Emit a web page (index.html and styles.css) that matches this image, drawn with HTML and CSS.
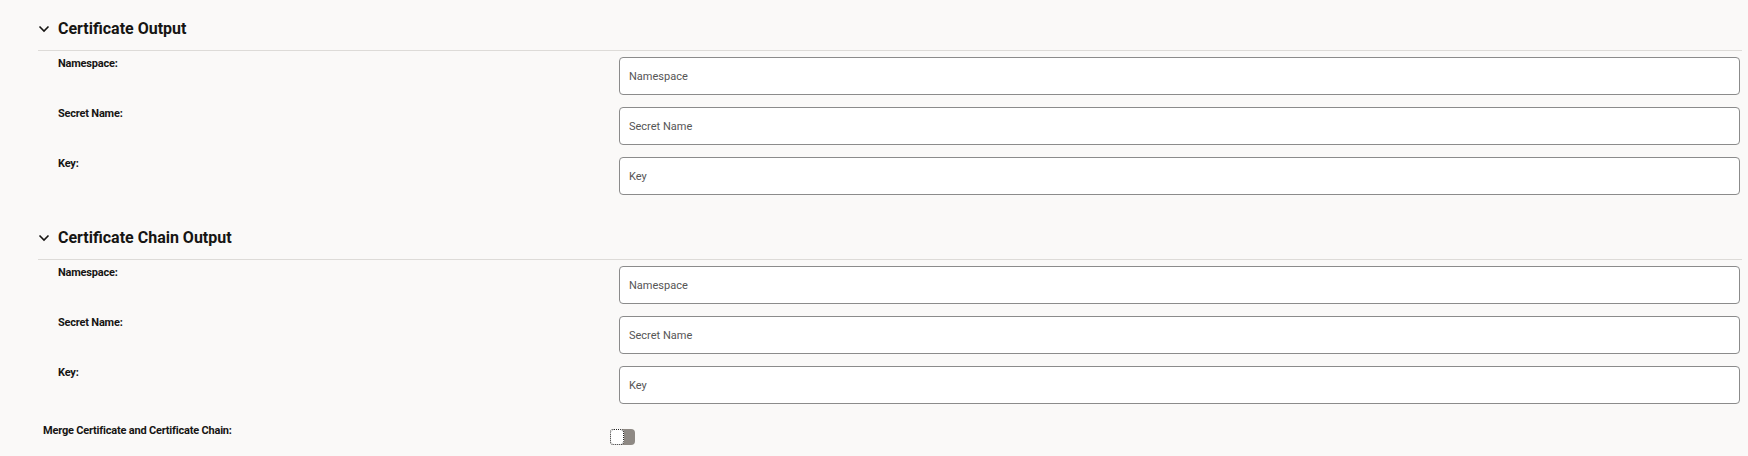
FILE: index.html
```html
<!DOCTYPE html>
<html lang="en">

<head>
  <meta charset="UTF-8" />
  <meta name="viewport" content="width=device-width, initial-scale=1.0" />
  <title>Certificate Output</title>
  <link rel="stylesheet" href="styles.css">
</head>

<body>
  <div class="page">
    <!-- 证书输出 -->
    <div class="section">
      <div class="section_head">
        <svg class="chevron" width="12" height="8" viewBox="0 0 12 8"><path d="M1.5 1.5 L6 6 L10.5 1.5" fill="none" stroke="#161513" stroke-width="1.6"/></svg>
        <span>Certificate Output</span>
      </div>
      <div class="fields">
        <label class="field_label">Namespace:</label>
        <input type="text" class="field_input" placeholder="Namespace" />
        <label class="field_label">Secret Name:</label>
        <input type="text" class="field_input" placeholder="Secret Name" />
        <label class="field_label">Key:</label>
        <input type="text" class="field_input" placeholder="Key" />
      </div>
    </div>
    <!-- 证书链输出 -->
    <div class="section section_second">
      <div class="section_head">
        <svg class="chevron" width="12" height="8" viewBox="0 0 12 8"><path d="M1.5 1.5 L6 6 L10.5 1.5" fill="none" stroke="#161513" stroke-width="1.6"/></svg>
        <span>Certificate Chain Output</span>
      </div>
      <div class="fields">
        <label class="field_label">Namespace:</label>
        <input type="text" class="field_input" placeholder="Namespace" />
        <label class="field_label">Secret Name:</label>
        <input type="text" class="field_input" placeholder="Secret Name" />
        <label class="field_label">Key:</label>
        <input type="text" class="field_input" placeholder="Key" />
      </div>
    </div>
    <!-- 合并开关 -->
    <div class="merge_row">
      <label class="field_label">Merge Certificate and Certificate Chain:</label>
      <div class="switch">
        <span class="switch_knob"></span>
      </div>
    </div>
  </div>
</body>

</html>
```

FILE: styles.css
```css
body {
  margin: 0px;
  padding: 0px;
  background-color: #faf9f8;
  font-family: Roboto, "Liberation Sans", sans-serif;
  color: #161513;
}

.page {
  padding: 0 6px 0 38px;
}

.section_head {
  display: flex;
  align-items: center;
  gap: 8px;
  padding: 19px 0 11px 0;
  line-height: 20px;
  font-size: 16px;
  font-weight: bold;
  border-bottom: 1px solid #dddbd8;
}

.chevron {
  display: block;
}

.section_second .section_head {
  padding-top: 33px;
}

.fields {
  display: grid;
  grid-template-columns: 561px 1fr;
  row-gap: 12px;
  padding: 6px 2px 0 20px;
}

.field_label {
  font-size: 11px;
  line-height: 14px;
  font-weight: bold;
  letter-spacing: -0.2px;
}

.field_input {
  height: 38px;
  box-sizing: border-box;
  border: 1px solid #8b8b8b;
  border-radius: 4px;
  background-color: #fff;
  padding: 0 9px;
  font-family: Roboto, "Liberation Sans", sans-serif;
  font-size: 11px;
  outline: none;
}

.field_input::placeholder {
  color: #555;
}

.merge_row {
  display: grid;
  grid-template-columns: 567px auto;
  padding: 20px 0 0 5px;
}

.switch {
  width: 25px;
  height: 16px;
  margin-top: 5px;
  border-radius: 4px;
  background-color: #8e8984;
  position: relative;
}

.switch_knob {
  position: absolute;
  left: 0;
  top: 0;
  width: 12px;
  height: 14px;
  background-color: #fff;
  border: 1px dotted #222;
  border-radius: 4px;
}
```
